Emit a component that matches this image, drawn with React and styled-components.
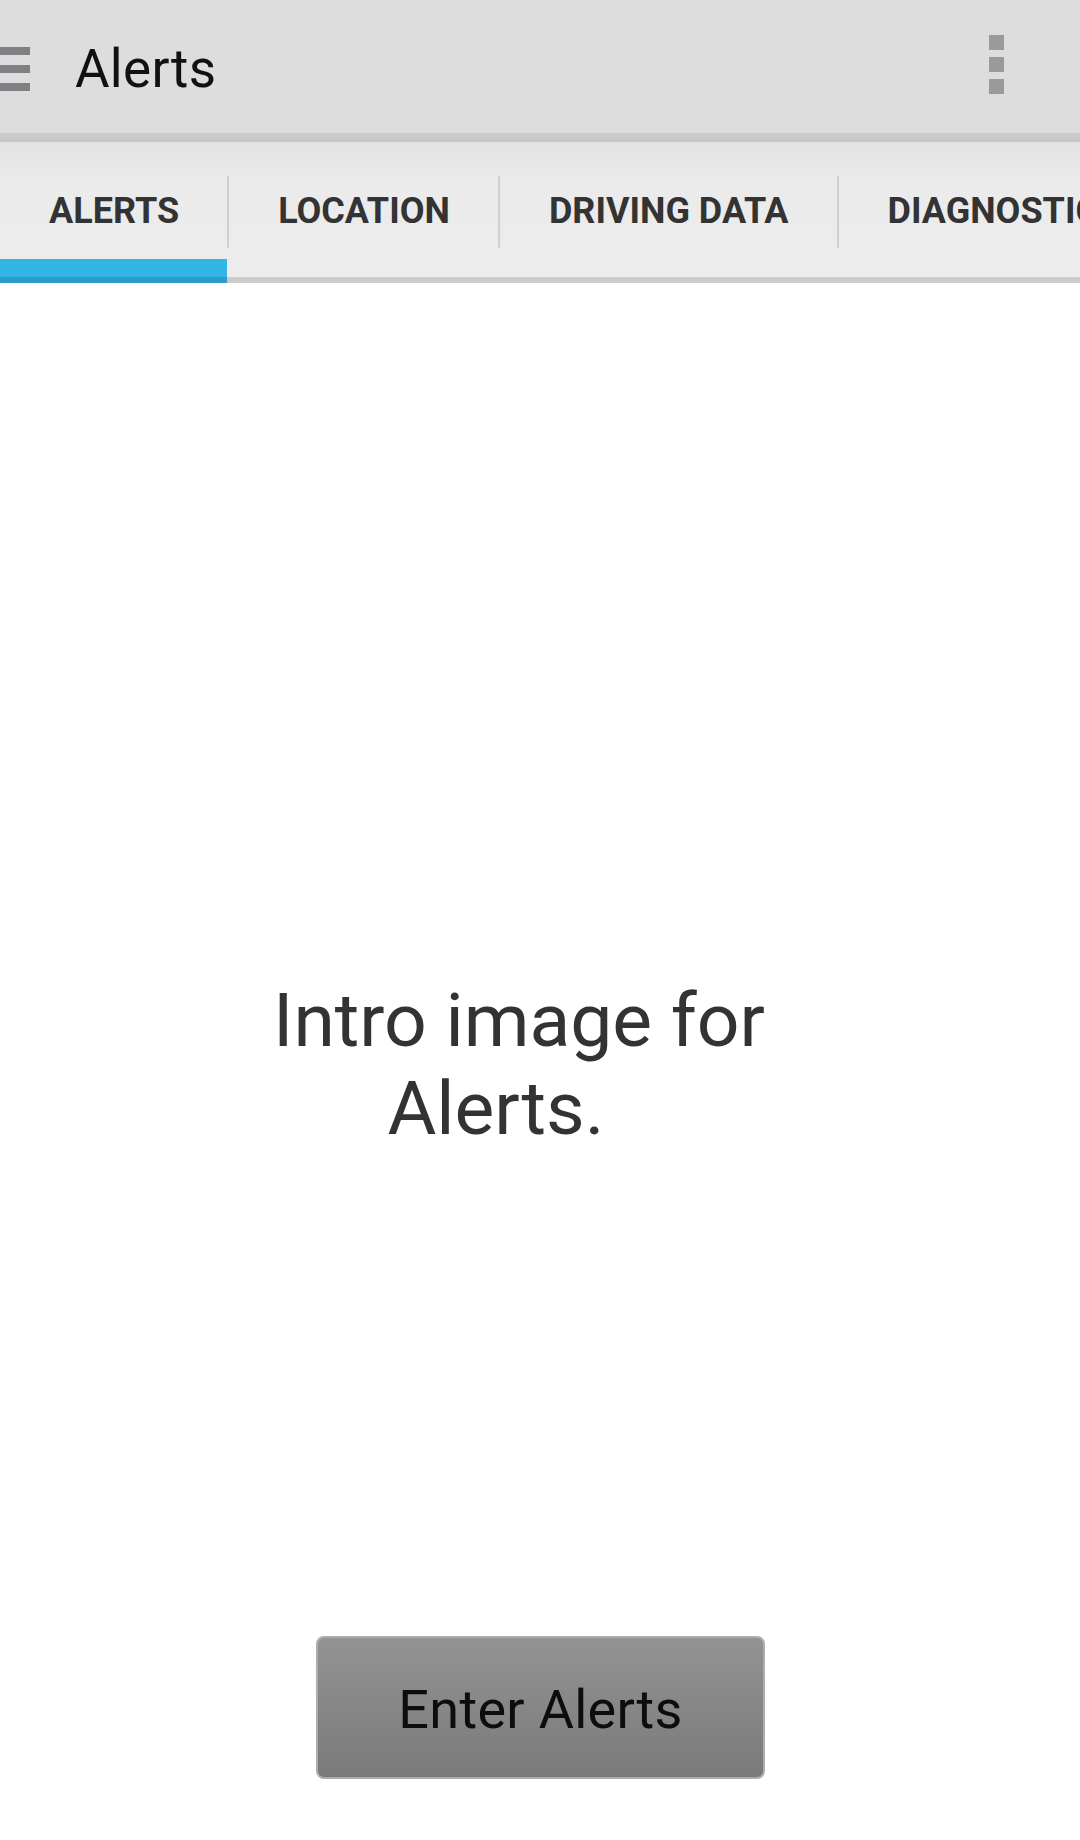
import React from 'react';
import styled, { createGlobalStyle } from 'styled-components';

const GlobalStyle = createGlobalStyle`
    *, *::before, *::after {
        box-sizing: border-box;
    }
    html, body {
        margin: 0;
        padding: 0;
        background: #ffffff;
    }
    body {
        font-family: Roboto, "Noto Sans", "Liberation Sans", sans-serif;
    }
`;

const Screen = styled.div`
    display: flex;
    flex-direction: column;
    width: 1080px;
    height: 1840px;
    overflow: hidden;
    background: #ffffff;
`;

const ActionBar = styled.header`
    display: flex;
    align-items: center;
    height: 133px;
    flex-shrink: 0;
    background: #dddddd;
`;

const Hamburger = styled.div`
    display: flex;
    flex-direction: column;
    gap: 10px;
    width: 30px;
    margin-top: 4px;

    & span {
        display: block;
        height: 8px;
        background: #7f7f84;
    }
`;

const Title = styled.h1`
    flex: 1;
    margin: 4px 0 0 45px;
    font-size: 53px;
    font-weight: 400;
    color: #111111;
    letter-spacing: 0.3px;
`;

const Overflow = styled.div`
    display: flex;
    flex-direction: column;
    gap: 7px;
    margin-right: 76px;
    margin-top: -4px;

    & span {
        display: block;
        width: 15px;
        height: 15px;
        background: #9a9a9a;
    }
`;

const TabBar = styled.nav`
    flex-shrink: 0;
    padding-top: 9px;
    background:
        linear-gradient(#cbcbcb 0, #cbcbcb 6px, #c6c6c6 6px, #c6c6c6 9px, #e2e2e2 9px, #ebebeb 45px, #ececec 100%);
`;

const TabRow = styled.div`
    display: flex;
    align-items: flex-start;
    height: 141px;
    margin-bottom: -6px;
    white-space: nowrap;
    box-shadow: inset 0 -6px 0 #cbcbcb;
    overflow: hidden;
`;

const Tab = styled.div`
    display: flex;
    align-items: center;
    flex-shrink: 0;
    height: 141px;
    padding: 2px 48px 6px 49px;
    font-size: 36px;
    font-weight: 700;
    color: #333333;
    ${p => p.$active && `
        box-shadow: inset 0 -6px 0 #2c9dcb, inset 0 -24px 0 #33b5e5;
    `}
`;

const TabDivider = styled.span`
    align-self: center;
    flex-shrink: 0;
    width: 2px;
    height: 72px;
    margin-top: -2px;
    background: #cfcfcf;
`;

const Content = styled.main`
    flex: 1;
    display: flex;
    flex-direction: column;
    align-items: center;
    margin-top: 6px;
`;

const Intro = styled.div`
    flex: 1;
    display: flex;
    align-items: center;
    justify-content: center;
    align-self: stretch;
    padding: 208px 42px 0 0;
`;

const IntroText = styled.p`
    margin: 0;
    text-align: center;
    font-size: 75px;
    line-height: 88px;
    color: #333333;
`;

const Line = styled.span`
    display: block;
    padding-right: ${p => p.$trail || 0}px;
`;

const EnterButton = styled.button`
    width: 449px;
    height: 143px;
    margin: 0 0 61px 1px;
    border: 2px solid #adadad;
    border-radius: 8px;
    background: linear-gradient(#939393, #7a7a7a);
    font-family: Roboto, "Noto Sans", sans-serif;
    font-size: 54px;
    color: #0d0d0d;
    letter-spacing: 0.3px;
    padding: 4px 0 0;
`;

const tabs = ['ALERTS', 'LOCATION', 'DRIVING DATA', 'DIAGNOSTICS'];

export default function App() {
    return (
        <Screen>
            <GlobalStyle />
            <ActionBar>
                <Hamburger>
                    <span />
                    <span />
                    <span />
                </Hamburger>
                <Title>Alerts</Title>
                <Overflow>
                    <span />
                    <span />
                    <span />
                </Overflow>
            </ActionBar>
            <TabBar>
                <TabRow>
                    {tabs.map((t, i) => (
                        <React.Fragment key={t}>
                            {i > 0 && <TabDivider />}
                            <Tab $active={i === 0}>{t}</Tab>
                        </React.Fragment>
                    ))}
                </TabRow>
            </TabBar>
            <Content>
                <Intro>
                    <IntroText>
                        <Line>Intro image for</Line>
                        <Line $trail={46}>Alerts.</Line>
                    </IntroText>
                </Intro>
                <EnterButton>Enter Alerts</EnterButton>
            </Content>
        </Screen>
    );
}
